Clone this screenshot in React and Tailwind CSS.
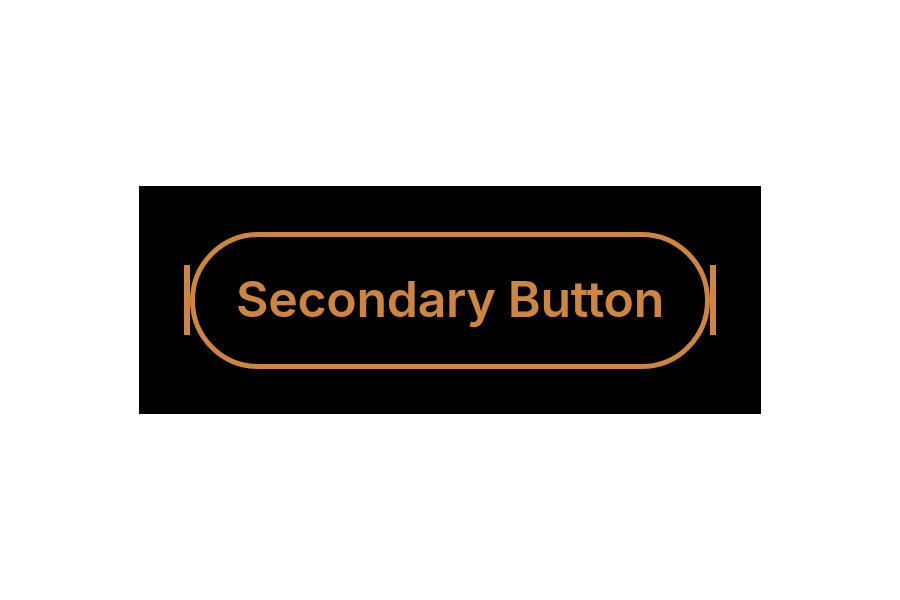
export default function App() {
  return (
    <div className="w-[900px] h-[600px] bg-white flex items-center justify-center">
      <div className="w-[622px] h-[228px] bg-black flex items-center justify-center">
        <div className="w-[6px] h-[70px] bg-[#CD853F]" />
        <button
          className="w-[520px] h-[137px] rounded-full border-[5px] border-[#CD853F] bg-black flex items-center justify-center text-[#CD853F] text-[50px] font-semibold tracking-[-0.3px] leading-none pb-[2px]"
          style={{ fontFamily: 'Inter, "Noto Sans", sans-serif' }}
        >
          Secondary Button
        </button>
        <div className="w-[6px] h-[70px] bg-[#CD853F]" />
      </div>
    </div>
  );
}
